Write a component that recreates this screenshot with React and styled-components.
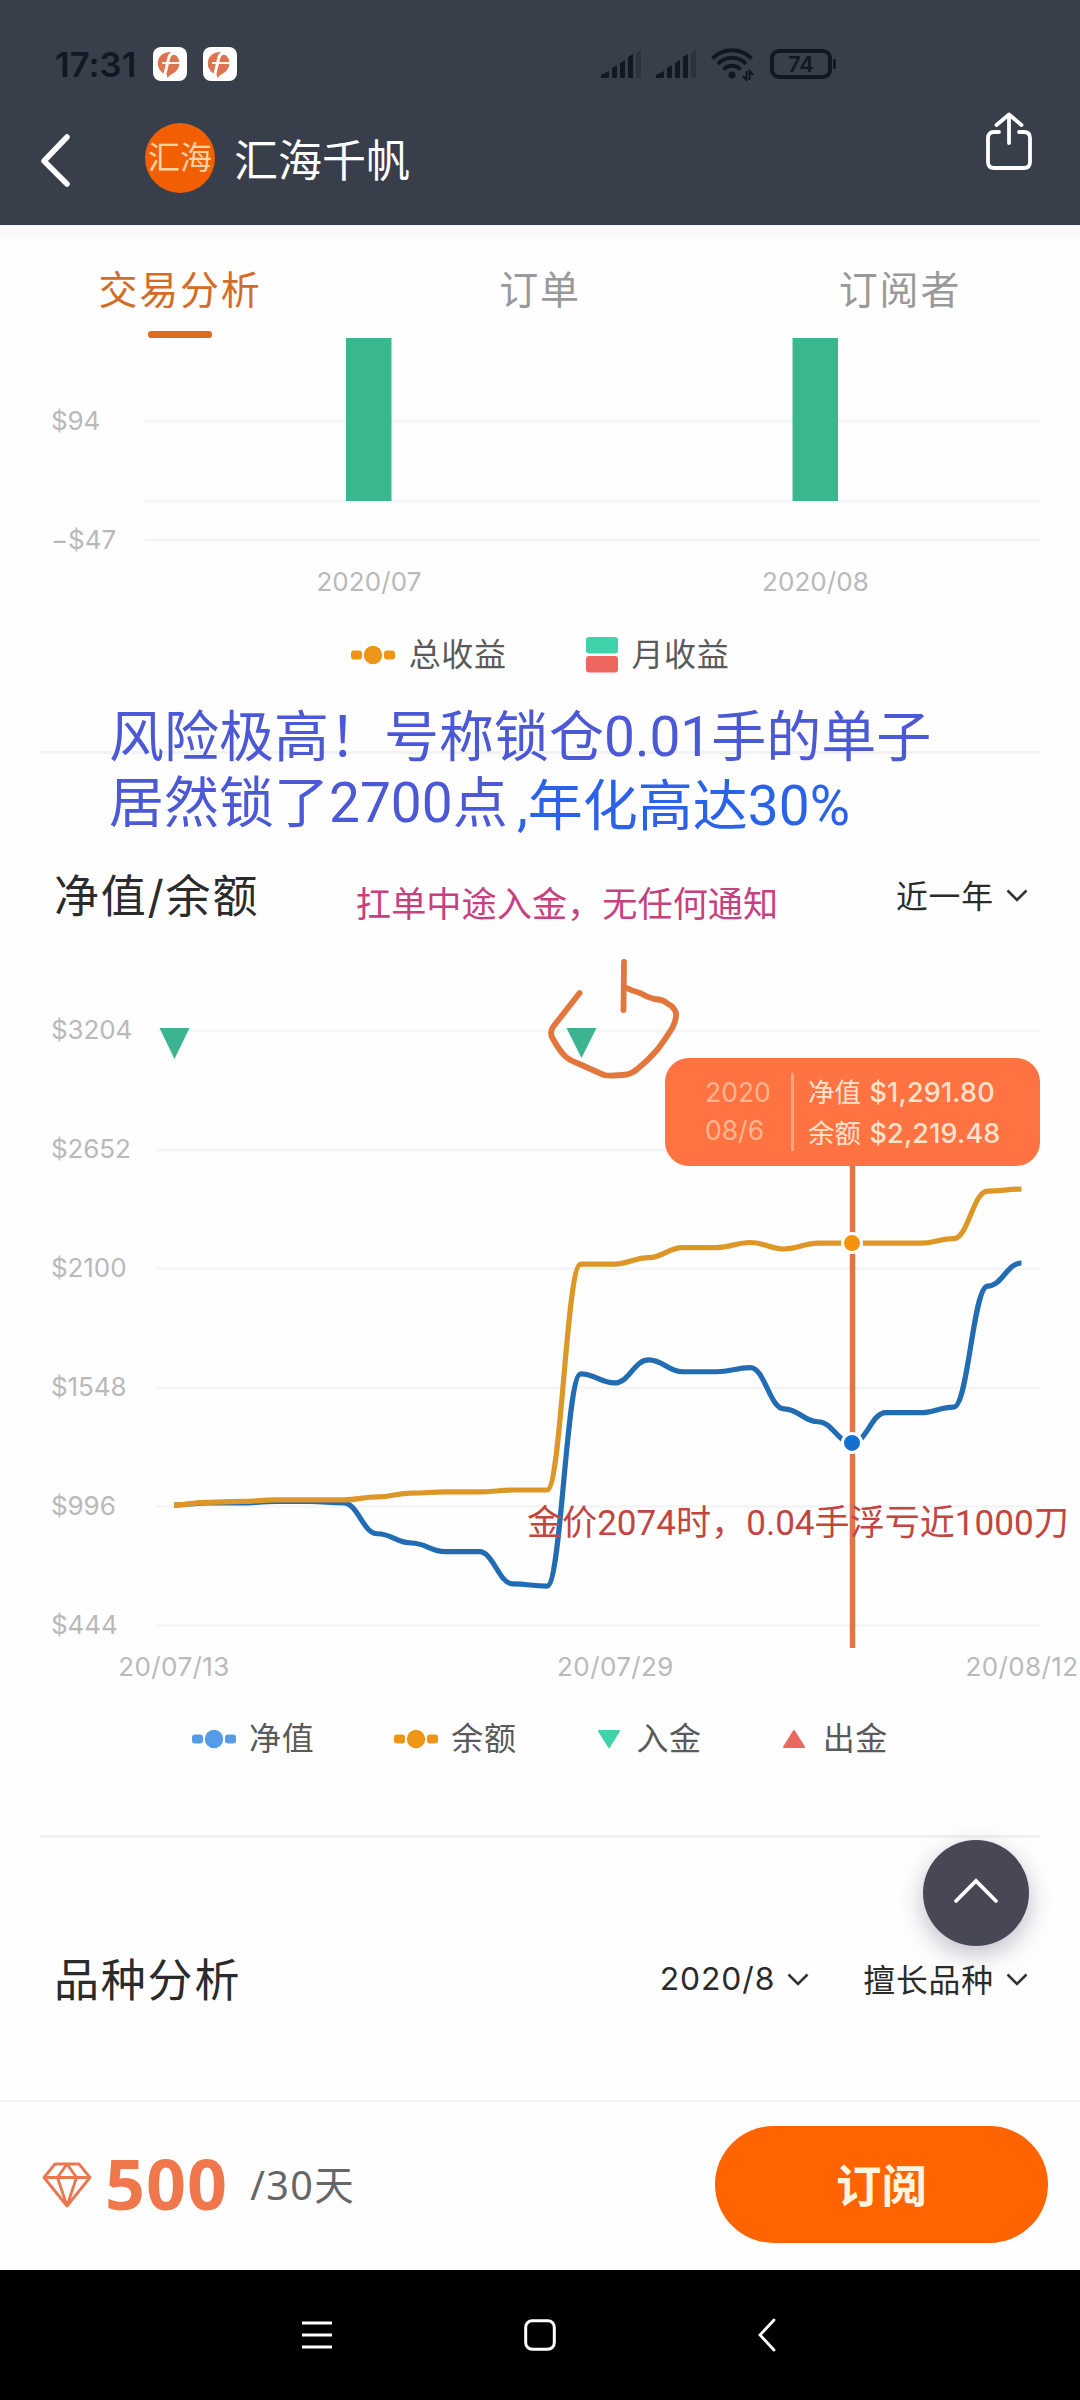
import React from 'react';
import styled, { createGlobalStyle } from 'styled-components';

const net = [
  1003, 1013, 1013, 1020, 1020, 1013, 870, 827, 787, 787, 637, 627, 1612, 1570,
  1677, 1622, 1622, 1641, 1450, 1390, 1291.8, 1432, 1432, 1458, 2020, 2127,
];
const balance = [
  1003, 1016, 1020, 1027, 1027, 1027, 1041, 1059, 1064, 1064, 1073, 1073, 2122, 2122,
  2152, 2198, 2198, 2222, 2192, 2219, 2219.48, 2219, 2219, 2240, 2461, 2470,
];
const levels = [3204, 2652, 2100, 1548, 996, 444];
const active = 20;

const px = (i) => 174 + i * 33.9;
const py = (v) => 97 + (3204 - v) * 0.2154;

const smooth = (values) =>
  values.reduce((d, v, i) => {
    if (i === 0) return `M${px(0)} ${py(v)}`;
    const c = 14.5;
    return `${d} C${px(i - 1) + c} ${py(values[i - 1])} ${px(i) - c} ${py(v)} ${px(i)} ${py(v)}`;
  }, '');

const AppBadge = () => (
  <svg width="34" height="34" viewBox="0 0 34 34">
    <rect width="34" height="34" rx="8" fill="#fff" />
    <path d="M17 5a11.500 11.500 0 0 1 2 22q-2.500 1-4.500 4.300l-.8-3.600A11.500 11.500 0 0 1 17 5z" fill="#dc7450" />
    <path d="M24 7c-5-2-7.500 0-8.500 5l-3.800 16" fill="none" stroke="#fff" strokeWidth="3" />
    <path d="M9 16H27" stroke="#fff" strokeWidth="1.800" />
  </svg>
);

const Signal = () => (
  <svg width="40" height="30" viewBox="0 0 40 30">
    <path d="M0 29v-3l8-4v7zM11 29V19l5-3v13zM19 29V14l5-3v18zM27 29V8l5-3v24z" fill="#111821" />
    <path d="M35 29V4l5-3v28z" fill="#2c333e" />
  </svg>
);

const Wifi = () => (
  <svg width="44" height="34" viewBox="0 0 44 34">
    <g fill="none" stroke="#111821" strokeWidth="4">
      <path d="M1.500 11.500a27 27 0 0 1 39 0M7 17a19 19 0 0 1 28 0M12.500 22.500a11.500 11.500 0 0 1 17 0" />
    </g>
    <circle cx="21" cy="28" r="3.500" fill="#111821" />
    <path d="M35.500 24v9l-3.500-4M38.500 33v-9l3.500 4" fill="none" stroke="#111821" strokeWidth="2" />
  </svg>
);

const Down = () => (
  <svg width="22" height="14" viewBox="0 0 22 14">
    <path d="M1.500 1.500L11 11l9.500-9.500" fill="none" stroke="#333" strokeWidth="2.600" />
  </svg>
);

const LineKey = ({ color }) => (
  <svg width="44" height="20" viewBox="0 0 44 20">
    <rect x="0" y="5.500" width="11" height="9" rx="3" fill={color} />
    <rect x="33" y="5.500" width="11" height="9" rx="3" fill={color} />
    <circle cx="22" cy="10" r="9.200" fill={color} />
  </svg>
);

const BarKey = () => (
  <svg width="32" height="36" viewBox="0 0 32 36">
    <rect width="32" height="16.500" rx="3" fill="#3fd3ab" />
    <rect y="19" width="32" height="16.500" rx="3" fill="#ee675f" />
  </svg>
);

const TriangleKey = ({ up }) => (
  <svg width="24" height="20" viewBox="0 0 24 20">
    {up ? (
      <path d="M12 2L22 18H2z" fill="#e9695f" stroke="#e9695f" strokeWidth="2" strokeLinejoin="round" />
    ) : (
      <path d="M2 2h20L12 18z" fill="#3fd3ab" stroke="#3fd3ab" strokeWidth="2" strokeLinejoin="round" />
    )}
  </svg>
);

const App = () => {
  return (
    <Page>
      <GlobalStyle />

      <Header>
        <StatusBar>
          <StatusLeft>
            <Clock>17:31</Clock>
            <AppBadge />
            <AppBadge />
          </StatusLeft>
          <StatusRight>
            <Signal />
            <Signal />
            <Wifi />
            <Battery>74</Battery>
          </StatusRight>
        </StatusBar>
        <TitleBar>
          <svg width="31" height="54" viewBox="0 0 31 54">
            <path d="M27 4L4 28l23 23" fill="none" stroke="#fff" strokeWidth="5.500" strokeLinecap="round" strokeLinejoin="round" />
          </svg>
          <Avatar>汇海</Avatar>
          <Trader>汇海千帆</Trader>
          <Share width="46" height="58" viewBox="0 0 46 58">
            <path
              d="M13 20H8q-6 0-6 6v24q0 6 6 6h30q6 0 6-6V26q0-6-6-6h-5M23 31V3M10.500 13L23 2.500 35.500 13"
              fill="none" stroke="#fff" strokeWidth="3.800" strokeLinecap="round" strokeLinejoin="round"
            />
          </Share>
        </TitleBar>
      </Header>

      <Strip />

      <Tabs>
        <Tab $active>交易分析</Tab>
        <Tab>订单</Tab>
        <Tab>订阅者</Tab>
      </Tabs>

      <Chart width="1080" height="272" viewBox="0 0 1080 272">
        <g stroke="#f3f4f4" strokeWidth="2.500">
          <path d="M145 83H1040M145 163H1040M145 202H1040" />
        </g>
        <rect x="346" y="0" width="45.500" height="163" fill="#39b890" />
        <rect x="792.500" y="0" width="45.500" height="163" fill="#39b890" />
        <text x="51" y="92">$94</text>
        <text x="51" y="211">−$47</text>
        <DateLabel x="369" y="253">2020/07</DateLabel>
        <DateLabel x="815.500" y="253">2020/08</DateLabel>
      </Chart>
      <Legend $gap={79}>
        <Key $gap={14}><LineKey color="#ee9416" />总收益</Key>
        <Key $gap={14}><BarKey />月收益</Key>
      </Legend>

      <Divider $top={51} />

      <SectionHead>
        <SectionTitle>净值/余额</SectionTitle>
        <Select>近一年 <Down /></Select>
      </SectionHead>

      <ChartArea>
        <Chart width="1080" height="756" viewBox="0 0 1080 756">
          {levels.map((v) => (
            <g key={v}>
              <path d={`M157 ${py(v)}H1040`} stroke="#f3f4f4" strokeWidth="2.500" />
              <text x="51" y={py(v) + 8}>${v}</text>
            </g>
          ))}
          <path d="M159.500 94h30L174.500 125zM566.500 94h30L581.500 124z" fill="#3cb491" />
          <path d={smooth(net)} fill="none" stroke="#226cb3" strokeWidth="5.200" />
          <path d={smooth(balance)} fill="none" stroke="#dc9727" strokeWidth="5.200" />
          <path d={`M${px(active) + 0.5} 180V714`} stroke="#dd754f" strokeWidth="5.500" />
          <circle cx={px(active)} cy={py(balance[active])} r="9.500" fill="#f6920f" stroke="#fff" strokeWidth="3" />
          <circle cx={px(active)} cy={py(net[active])} r="9.500" fill="#146fd0" stroke="#fff" strokeWidth="3" />
          <DateLabel $wide x="174" y="742">20/07/13</DateLabel>
          <DateLabel $wide x="615.500" y="742">20/07/29</DateLabel>
          <DateLabel $wide x="1022" y="742">20/08/12</DateLabel>
          {/* hand drawn mark round the deposit */}
          <path
            d="M579.600 59L553 93q-4 6 0 12 6 11 12 17 4 4 12 7l27 12q6 1.500 23-.5 6-1.500 11-6 10-8 19.500-19 9-12 15-22 4-8 3.500-14-1-6-8.500-10-4-4-13.500-4.500-7-2-14.400-6.300-8-2-14.600-5.500M624 28l-.5 48"
            fill="none" stroke="#e2763d" strokeWidth="5.800" strokeLinecap="round" strokeLinejoin="round"
          />
        </Chart>
        <Tooltip>
          <TipDate>
            <span>2020</span>
            <span>08/6</span>
          </TipDate>
          <TipValues>
            <span>净值 <b>$1,291.80</b></span>
            <span>余额 <b>$2,219.48</b></span>
          </TipValues>
        </Tooltip>
      </ChartArea>
      <Legend $gap={80} $down={8}>
        <Key $gap={13}><LineKey color="#549be8" />净值</Key>
        <Key $gap={13}><LineKey color="#ee9416" />余额</Key>
        <Key $gap={16}><TriangleKey />入金</Key>
        <Key $gap={17}><TriangleKey up />出金</Key>
      </Legend>

      <Divider $top={55} />

      <SectionHead>
        <SectionTitle>品种分析</SectionTitle>
        <Select>2020/8 <Down /></Select>
        <Select>擅长品种 <Down /></Select>
      </SectionHead>

      <Footer>
        <svg width="50" height="46" viewBox="0 0 50 46">
          <path
            d="M13 2h24l11 13.500L25 44 2 15.500zM2 15.500h46M25 2L15.500 15.500 25 44l9.500-28.500z"
            fill="none" stroke="#e97850" strokeWidth="2.800" strokeLinejoin="round"
          />
        </svg>
        <Price>500</Price>
        <Period>/30天</Period>
        <Subscribe>订阅</Subscribe>
      </Footer>

      <NavBar>
        <svg width="32" height="32" viewBox="0 0 32 32">
          <path d="M1 4h30M1 16h30M1 28h30" stroke="#fff" strokeWidth="3" />
        </svg>
        <svg width="32" height="32" viewBox="0 0 32 32">
          <rect x="1.700" y="1.700" width="28.600" height="28.600" rx="6.500" fill="none" stroke="#fff" strokeWidth="3" />
        </svg>
        <svg width="20" height="34" viewBox="0 0 20 34">
          <path d="M17 2L3 17l14 15" fill="none" stroke="#fff" strokeWidth="2.800" strokeLinecap="round" />
        </svg>
      </NavBar>

      <Note $x={109} $y={703} $size={55} $color="#4b59d6">风险极高！号称锁仓0.01手的单子</Note>
      <Note $x={109} $y={769} $size={55} $color="#4b59d6">居然锁了2700点</Note>
      <Note $x={517} $y={772} $size={55} $color="#2b62ea">,年化高达30%</Note>
      <Note $x={356} $y={883} $size={35.2} $color="#c6417f">扛单中途入金，无任何通知</Note>
      <Note $x={527} $y={1502} $size={35.1} $color="#c24540">金价2074时，0.04手浮亏近1000刀</Note>

      <BackTop>
        <svg width="46" height="26" viewBox="0 0 46 26">
          <path d="M3 23L23 3l20 20" fill="none" stroke="#fff" strokeWidth="3.800" strokeLinecap="round" />
        </svg>
      </BackTop>
    </Page>
  );
};

export default App;

const GlobalStyle = createGlobalStyle`
  * {
    box-sizing: border-box;
  }
  body {
    margin: 0;
    background: #fefefe;
    font-family: Inter, 'Noto Sans CJK SC', sans-serif;
  }
  svg {
    display: block;
    flex-shrink: 0;
  }
`;

const Page = styled.div`
  position: relative;
  display: flex;
  flex-direction: column;
  width: 1080px;
  height: 2400px;
  overflow: hidden;
  background: #fefefe;
`;

const Header = styled.header`
  height: 225px;
  background: #383e4a;
`;

const StatusBar = styled.div`
  display: grid;
  grid-template-columns: 546px 1fr;
  align-items: center;
  height: 128px;
  padding-left: 55px;
`;

const StatusLeft = styled.div`
  display: flex;
  align-items: center;
  gap: 16px;
`;

const Clock = styled.span`
  width: 82px;
  color: #111821;
  font-size: 34.5px;
  font-weight: 600;
  letter-spacing: 0.1px;
`;

const StatusRight = styled.div`
  display: flex;
  align-items: center;
  gap: 15px;
`;

const Battery = styled.div`
  position: relative;
  width: 62px;
  height: 30px;
  border: 4px solid #111821;
  border-radius: 9px;
  color: #111821;
  font-size: 22px;
  font-weight: 600;
  line-height: 23px;
  text-align: center;

  &::after {
    content: '';
    position: absolute;
    right: -8px;
    top: 6px;
    width: 3px;
    height: 10px;
    border-radius: 0 2px 2px 0;
    background: #111821;
  }
`;

const TitleBar = styled.div`
  display: flex;
  align-items: center;
  height: 64px;
  padding: 0 48px 0 40px;
`;

const Avatar = styled.div`
  width: 70px;
  height: 70px;
  margin: 0 19px 4px 74px;
  border-radius: 50%;
  background: #f25f02;
  color: #ffd2a6;
  font-size: 32px;
  line-height: 70px;
  text-align: center;
  white-space: nowrap;
`;

const Trader = styled.h1`
  flex: 1;
  margin: 0;
  padding-bottom: 4px;
  color: #fff;
  font-size: 44px;
  font-weight: 400;
`;

const Share = styled.svg`
  margin-bottom: 38px;
`;

const Strip = styled.div`
  height: 13px;
  background: #fafafa;
`;

const Tabs = styled.nav`
  display: grid;
  grid-template-columns: repeat(3, 1fr);
  height: 100px;
`;

const Tab = styled.div`
  display: flex;
  flex-direction: column;
  align-items: center;
  padding-top: 32px;
  color: ${(props) => (props.$active ? '#d36c26' : '#999')};
  font-size: 39px;
  line-height: 40px;
  letter-spacing: 1.8px;

  &::after {
    content: '';
    width: 64px;
    height: 7px;
    margin-top: auto;
    border-radius: 3px;
    background: ${(props) => (props.$active ? '#dc6c22' : 'transparent')};
  }
`;

const Chart = styled.svg`
  text {
    fill: #b9b9b9;
    font-size: 26px;
    letter-spacing: -0.1px;
  }
`;

const DateLabel = styled.text`
  text-anchor: middle;

  ${Chart} & {
    letter-spacing: ${(props) => (props.$wide ? '0.4px' : '0.1px')};
  }
`;

const Legend = styled.div`
  display: flex;
  align-items: center;
  justify-content: center;
  gap: ${(props) => props.$gap}px;
  height: 90px;
  padding-top: ${(props) => props.$down || 0}px;
`;

const Key = styled.div`
  display: flex;
  align-items: center;
  gap: ${(props) => props.$gap}px;
  color: #5a5a5a;
  font-size: 32px;
  line-height: 36px;
  letter-spacing: 0.6px;
`;

const Divider = styled.div`
  height: 3px;
  margin: ${(props) => props.$top}px 40px 104px;
  background: #f2f2f2;
`;

const SectionHead = styled.div`
  display: flex;
  align-items: center;
  gap: 54px;
  height: 76px;
  padding: 0 52px 0 54px;
`;

const SectionTitle = styled.h2`
  flex: 1;
  margin: 0;
  padding-bottom: 6px;
  color: #2b2b2b;
  font-size: 45px;
  font-weight: 400;
  letter-spacing: 1.8px;
`;

const Select = styled.div`
  display: flex;
  align-items: center;
  gap: 12px;
  padding-bottom: 4px;
  color: #2b2b2b;
  font-size: 31.8px;
  letter-spacing: 0.9px;

  svg {
    margin-top: 4px;
  }
`;

const ChartArea = styled.div`
  position: relative;
  height: 756px;
`;

const Tooltip = styled.div`
  position: absolute;
  left: 665px;
  top: 124px;
  display: flex;
  align-items: center;
  width: 375px;
  height: 108px;
  padding-left: 40px;
  border-radius: 24px;
  background: #ff7342;
  font-size: 26.5px;
  line-height: 40px;
`;

const TipDate = styled.div`
  display: flex;
  flex-direction: column;
  width: 89px;
  padding-bottom: 2px;
  border-right: 3px solid #ffa783;
  color: #ffb592;
  line-height: 38px;
`;

const TipValues = styled.div`
  display: flex;
  flex-direction: column;
  padding: 1px 0 0 14px;
  color: #ffe3cf;
  white-space: nowrap;

  b {
    margin-left: 1px;
    font-size: 27px;
    font-weight: 500;
    letter-spacing: 0.2px;
  }
`;

const Footer = styled.footer`
  display: flex;
  align-items: center;
  height: 170px;
  margin-top: auto;
  padding: 0 32px 3px 42px;
  border-top: 2px solid #f3f3f3;
`;

const Price = styled.span`
  margin-left: 13px;
  padding-bottom: 3px;
  color: #ef774b;
  font-family: 'Noto Sans', sans-serif;
  font-size: 70px;
  font-weight: 700;
  line-height: 80px;
  letter-spacing: 1px;
`;

const Period = styled.span`
  margin-left: 22px;
  padding-bottom: 3px;
  color: #666;
  font-family: 'Noto Sans', 'Noto Sans CJK SC', sans-serif;
  font-size: 39.5px;
  letter-spacing: 1.4px;
`;

const Subscribe = styled.button`
  width: 333px;
  height: 117px;
  margin-left: auto;
  padding: 0 0 3px;
  border: 0;
  border-radius: 59px;
  background: #ff6400;
  color: #fff4de;
  font-family: inherit;
  font-size: 45.5px;
  font-weight: 700;
`;

const NavBar = styled.div`
  display: flex;
  align-items: center;
  gap: 191px;
  height: 130px;
  flex-shrink: 0;
  padding-left: 301px;
  background: #000;

  svg:last-child {
    margin-left: 10px;
  }
`;

const Note = styled.div`
  position: absolute;
  left: ${(props) => props.$x}px;
  top: ${(props) => props.$y}px;
  color: ${(props) => props.$color};
  font-family: Roboto, 'Noto Sans CJK SC', sans-serif;
  font-size: ${(props) => props.$size}px;
  line-height: 1.25;
  white-space: nowrap;
`;

const BackTop = styled.div`
  position: absolute;
  left: 923px;
  top: 1840px;
  display: flex;
  align-items: center;
  justify-content: center;
  width: 106px;
  height: 106px;
  padding-bottom: 4px;
  border-radius: 50%;
  background: #484756;
  box-shadow: 0 8px 24px rgba(72, 71, 100, 0.35);
`;
